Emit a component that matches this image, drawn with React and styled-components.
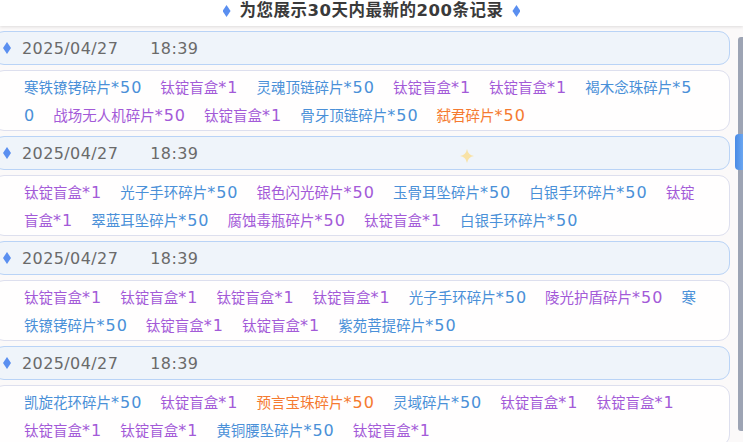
import styled, { createGlobalStyle } from "styled-components";

const GlobalStyle = createGlobalStyle`
    html, body {
        margin: 0;
        padding: 0;
        background: #fbf9f9;
        overflow: hidden;
    }
    body {
        font-family: "Noto Sans CJK SC", "Noto Sans", sans-serif;
    }
`

const Page = styled.div`
    position: relative;
    width: 743px;
    height: 442px;
    overflow: hidden;
    background: #fbf9f9;
`

const TopBar = styled.div`
    position: relative;
    z-index: 1;
    height: 26px;
    background: #ffffff;
    box-shadow: 0 1px 3px rgba(0, 0, 0, 0.12);
    display: flex;
    align-items: center;
    justify-content: center;
    gap: 9px;
`

const Title = styled.div`
    font-family: "DejaVu Sans", "Noto Sans CJK SC", sans-serif;
    font-size: 16.5px;
    font-weight: bold;
    letter-spacing: 0.5px;
    color: #3a3a3a;
    line-height: 20px;
    margin-top: -4px;
`

const Diamond = styled.span`
    display: inline-block;
    width: ${(p) => p.w || 8}px;
    height: ${(p) => p.h || 12}px;
    background: #5a8ff0;
    clip-path: polygon(50% 0, 100% 50%, 50% 100%, 0 50%);
    flex-shrink: 0;
    margin-top: ${(p) => (p.up ? -4 : 0)}px;
`

const Main = styled.div`
    display: flex;
`

const List = styled.div`
    flex: 1;
    margin: 0 3px 0 -7px;
    padding-top: 5px;
`

const DateCard = styled.div`
    height: 34px;
    box-sizing: border-box;
    border: 1px solid #b9d3f6;
    border-radius: 11px;
    background: #eff4fa;
    display: flex;
    align-items: center;
    padding-left: 9px;
    gap: 11px;
    margin-bottom: 5px;
`

const DateText = styled.span`
    font-family: "DejaVu Sans", sans-serif;
    font-size: 16px;
    letter-spacing: 0.4px;
    color: #6a6a6a;
`

const TimeText = styled(DateText)`
    margin-left: 21px;
`

const ItemCard = styled.div`
    height: 61px;
    box-sizing: border-box;
    border: 1px solid #dddfee;
    border-radius: 11px;
    background: #fffefe;
    padding: 2px 30px 3px 30px;
    margin-bottom: 5px;
    line-height: 27px;
    word-break: break-all;
    overflow: hidden;
`

const Item = styled.span`
    font-size: 14.5px;
    color: ${(p) => p.color};
    margin-right: 18px;
`

const Count = styled.span`
    font-family: "DejaVu Sans", sans-serif;
    font-size: 16px;
    letter-spacing: 1px;
`

const Rail = styled.div`
    width: 10px;
    padding-top: 11px;
    display: flex;
    justify-content: flex-end;
`

const Track = styled.div`
    width: 5px;
    height: 394px;
    background: #9da4b4;
    border-radius: 3px 0 0 3px;
`

const Thumb = styled.div`
    width: 8px;
    height: 36px;
    margin: 97px 0 0 -3px;
    border-radius: 4px 0 0 4px;
    background: linear-gradient(90deg, #4a8be6, #6aa6f0);
`

const Sparkle = styled.svg`
    position: absolute;
    left: 460px;
    top: 149px;
    width: 14px;
    height: 14px;
    filter: blur(0.6px);
`

const BLUE = "#4a90d8";
const PURPLE = "#a35ad8";
const ORANGE = "#f57a30";

const records = [
    {
        date: "2025/04/27",
        time: "18:39",
        items: [
            ["寒铁镣铐碎片", "*50", BLUE],
            ["钛锭盲盒", "*1", PURPLE],
            ["灵魂顶链碎片", "*50", BLUE],
            ["钛锭盲盒", "*1", PURPLE],
            ["钛锭盲盒", "*1", PURPLE],
            ["褐木念珠碎片", "*50", BLUE],
            ["战场无人机碎片", "*50", PURPLE],
            ["钛锭盲盒", "*1", PURPLE],
            ["骨牙顶链碎片", "*50", BLUE],
            ["弑君碎片", "*50", ORANGE],
        ],
    },
    {
        date: "2025/04/27",
        time: "18:39",
        items: [
            ["钛锭盲盒", "*1", PURPLE],
            ["光子手环碎片", "*50", BLUE],
            ["银色闪光碎片", "*50", PURPLE],
            ["玉骨耳坠碎片", "*50", BLUE],
            ["白银手环碎片", "*50", BLUE],
            ["钛锭盲盒", "*1", PURPLE],
            ["翠蓝耳坠碎片", "*50", BLUE],
            ["腐蚀毒瓶碎片", "*50", PURPLE],
            ["钛锭盲盒", "*1", PURPLE],
            ["白银手环碎片", "*50", BLUE],
        ],
    },
    {
        date: "2025/04/27",
        time: "18:39",
        items: [
            ["钛锭盲盒", "*1", PURPLE],
            ["钛锭盲盒", "*1", PURPLE],
            ["钛锭盲盒", "*1", PURPLE],
            ["钛锭盲盒", "*1", PURPLE],
            ["光子手环碎片", "*50", BLUE],
            ["陵光护盾碎片", "*50", PURPLE],
            ["寒铁镣铐碎片", "*50", BLUE],
            ["钛锭盲盒", "*1", PURPLE],
            ["钛锭盲盒", "*1", PURPLE],
            ["紫苑菩提碎片", "*50", BLUE],
        ],
    },
    {
        date: "2025/04/27",
        time: "18:39",
        items: [
            ["凯旋花环碎片", "*50", BLUE],
            ["钛锭盲盒", "*1", PURPLE],
            ["预言宝珠碎片", "*50", ORANGE],
            ["灵域碎片", "*50", BLUE],
            ["钛锭盲盒", "*1", PURPLE],
            ["钛锭盲盒", "*1", PURPLE],
            ["钛锭盲盒", "*1", PURPLE],
            ["钛锭盲盒", "*1", PURPLE],
            ["黄铜腰坠碎片", "*50", BLUE],
            ["钛锭盲盒", "*1", PURPLE],
        ],
    },
];

function Record({ date, time, items }) {
    return (
        <>
            <DateCard>
                <Diamond />
                <DateText>{date}</DateText>
                <TimeText>{time}</TimeText>
            </DateCard>
            <ItemCard>
                {items.map(([name, count, color], i) => (
                    <Item key={i} color={color}>
                        {name}
                        <Count>{count}</Count>
                    </Item>
                ))}
            </ItemCard>
        </>
    );
}

export default function App() {
    return (
        <Page>
            <GlobalStyle />
            <TopBar>
                <Diamond up />
                <Title>为您展示30天内最新的200条记录</Title>
                <Diamond up />
            </TopBar>
            <Main>
                <List>
                    {records.map((r, i) => (
                        <Record key={i} {...r} />
                    ))}
                </List>
                <Rail>
                    <Track>
                        <Thumb />
                    </Track>
                </Rail>
            </Main>
            <Sparkle viewBox="0 0 14 14">
                <path d="M7 0 Q8 6 14 7 Q8 8 7 14 Q6 8 0 7 Q6 6 7 0Z" fill="#f8e2a6" />
            </Sparkle>
        </Page>
    );
}
